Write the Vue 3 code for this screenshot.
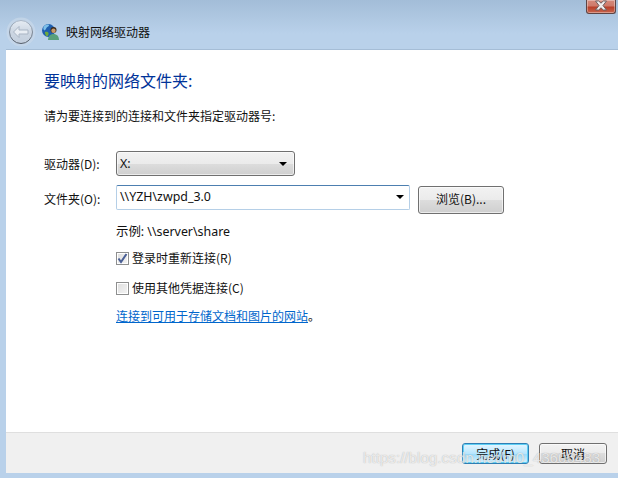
<script setup>
const base = 'https://blog.csdn.net/m0_43606483'
</script>

<template>
  <div class="window">
    <div class="caption">
      <button class="close" aria-label="关闭">
        <svg width="14" height="11" viewBox="0 0 14 11">
          <path d="M1.500 1h3.200L7 3.200 9.300 1h3.200L9 5.500l3.500 4.500H9.300L7 7.800 4.700 10H1.500L5 5.500z" fill="#f1eeee" stroke="#6b5f60" stroke-width="1"/>
        </svg>
      </button>
    </div>
    <div class="titlebar">
      <div class="back">
        <svg width="30" height="30" viewBox="0 0 30 30">
          <defs>
            <linearGradient id="backFill" x1="0" y1="0" x2="0" y2="1">
              <stop offset="0" stop-color="#e6ecf3"/>
              <stop offset="0.5" stop-color="#ccd6e2"/>
              <stop offset="1" stop-color="#c3cfde"/>
            </linearGradient>
            <linearGradient id="backRing" x1="0" y1="0" x2="0" y2="1">
              <stop offset="0" stop-color="#a9b6c6"/>
              <stop offset="1" stop-color="#545d69"/>
            </linearGradient>
          </defs>
          <circle cx="15" cy="15" r="14.500" fill="#c9d9ea" opacity=".7"/>
          <circle cx="15" cy="15" r="11.500" fill="url(#backFill)" stroke="url(#backRing)" stroke-width="1"/>
          <path d="M7.500 15l5.500-5.500v3.500h9v4h-9v3.500z" fill="#e9eef4" stroke="#a9b5c4" stroke-width="1" stroke-linejoin="round"/>
        </svg>
      </div>
      <svg class="netdrive" width="18" height="16" viewBox="0 0 18 16">
        <circle cx="6.500" cy="6.500" r="6.500" fill="#1f5fae"/>
        <path d="M2.500 1.800C4 .6 5.500.4 7 .8 7.300 2 6 2.700 5 3.300S4 6 2.500 6.500C.8 5.500 1 3 2.500 1.800z" fill="#7cc0ea"/>
        <path d="M3 8c1.500-.5 3-.3 3.500 1 .3 1.500-.3 2.800-1.500 3.500C3.700 11.500 2.800 9.800 3 8z" fill="#6cab3c"/>
        <circle cx="11.500" cy="6" r="3" fill="#3b2a1c"/>
        <circle cx="11.500" cy="6.800" r="2.200" fill="#c79a68"/>
        <path d="M6 16c0-3.800 2.200-6 5.500-6s5.500 2.200 5.500 6z" fill="#58a07c"/>
      </svg>
      <span class="title">映射网络驱动器</span>
    </div>

    <div class="panel">
      <main class="content">
        <h1 class="heading">要映射的网络文件夹:</h1>
        <p class="intro">请为要连接到的连接和文件夹指定驱动器号:</p>

        <div class="row drive-row">
          <label class="label">驱动器(D):</label>
          <div class="combo">
            <span>X:</span>
            <i class="arrow"></i>
          </div>
        </div>

        <div class="row folder-row">
          <label class="label">文件夹(O):</label>
          <div class="field">
            <span>\\YZH\zwpd_3.0</span>
            <i class="arrow"></i>
          </div>
          <button class="btn browse">浏览(B)...</button>
        </div>

        <div class="options">
          <p class="example">示例: \\server\share</p>
          <div class="check first">
            <span class="box">
              <svg width="11" height="11" viewBox="0 0 11 11">
                <path d="M1.500 5.500l2.500 3.500 5.500-8" fill="none" stroke="#4a5f95" stroke-width="2"/>
              </svg>
            </span>
            <span>登录时重新连接(R)</span>
          </div>
          <div class="check second">
            <span class="box"></span>
            <span>使用其他凭据连接(C)</span>
          </div>
          <p class="link-line"><a class="link">连接到可用于存储文档和图片的网站</a>。</p>
        </div>
      </main>

      <footer class="footer">
        <button class="btn primary">完成(F)</button>
        <button class="btn cancel">取消</button>
      </footer>
    </div>

    <div class="watermark">{{ base }}</div>
  </div>
</template>

<style>
html, body { margin: 0; background: #b9d1ea; }
</style>

<style scoped>
.window {
  position: relative;
  width: 618px;
  height: 478px;
  overflow: hidden;
  display: flex;
  flex-direction: column;
  background: linear-gradient(#a3bdd8 0, #b9d1ea 34px);
  font-family: "Noto Sans CJK SC", "Noto Sans", sans-serif;
  font-size: 12px;
  color: #111;
}
.caption {
  height: 13px;
  display: flex;
  justify-content: flex-end;
  padding-right: 2px;
}
.close {
  width: 30px;
  height: 14px;
  padding: 0;
  border: 1px solid #5d4444;
  border-top: 0;
  border-radius: 0 0 3px 3px;
  background: linear-gradient(#d58a7c 0, #cf7a6a 45%, #b8402a 55%, #c8664e 100%);
  box-shadow: inset 0 0 0 1px rgba(255,255,255,.35);
  display: flex;
  align-items: flex-start;
  justify-content: center;
}
.titlebar {
  height: 36px;
  display: flex;
  align-items: center;
  padding-left: 6px;
}
.back { width: 30px; height: 30px; margin-top: 2px; }
.netdrive { margin-left: 6px; margin-top: 1px; }
.title {
  margin-left: 6px;
  font-size: 12px;
  color: #111;
  margin-top: 1px;
}
.panel {
  flex: 1;
  margin: 0 0 5px 6px;
  display: flex;
  flex-direction: column;
  background: #fff;
  border-top: 1px solid #a5bdd6;
}
.content { flex: 1; padding: 19px 0 0 38px; }
.heading {
  margin: 0;
  font-size: 16px;
  font-weight: 400;
  line-height: 22px;
  color: #003399;
}
.intro { margin: 16px 0 0; line-height: 18px; }
.row { display: flex; align-items: flex-start; }
.label { width: 72px; line-height: 18px; }
.drive-row { margin-top: 26px; }
.drive-row .label { padding-top: 4px; }
.combo {
  width: 179px;
  height: 25px;
  box-sizing: border-box;
  border: 1px solid #707070;
  border-radius: 3px;
  background: linear-gradient(#f2f2f2 0, #ebebeb 50%, #dddddd 50%, #cfcfcf 100%);
  box-shadow: inset 0 0 0 1px rgba(255,255,255,.6);
  display: flex;
  align-items: center;
  justify-content: space-between;
  padding: 0 7px 1px 3px;
  font-family: "Noto Sans", sans-serif;
  font-size: 12.500px;
}
.arrow {
  width: 0;
  height: 0;
  border: 4px solid transparent;
  border-top: 4px solid #000;
  border-bottom: 0;
  margin-top: 2px;
}
.folder-row { margin-top: 9px; }
.folder-row .label { padding-top: 5px; }
.field {
  width: 294px;
  height: 25px;
  box-sizing: border-box;
  border: 1px solid #b5cfe7;
  border-top-color: #4d7fb0;
  border-radius: 2px;
  display: flex;
  align-items: center;
  justify-content: space-between;
  padding: 0 5px 3px 3px;
  font-family: "Noto Sans", sans-serif;
  font-size: 12.400px;
}
.btn {
  font: inherit;
  color: #111;
  padding: 0;
  box-sizing: border-box;
  border: 1px solid #707070;
  border-radius: 3px;
  background: linear-gradient(#f2f2f2 0, #ebebeb 50%, #dddddd 50%, #cfcfcf 100%);
  box-shadow: inset 0 0 0 1px rgba(255,255,255,.6);
}
.browse { width: 86px; height: 28px; margin: 1px 0 0 8px; padding-bottom: 3px; }
.options { padding-left: 72px; }
.example { margin: 9px 0 0; line-height: 18px; font-family: "Noto Sans", "Noto Sans CJK SC", sans-serif; font-size: 12.400px; }
.check { display: flex; align-items: center; gap: 3px; line-height: 18px; }
.first { margin-top: 8px; }
.second { margin-top: 12px; }
.box {
  width: 13px;
  height: 13px;
  box-sizing: border-box;
  border: 1px solid #8e8f8f;
  background: linear-gradient(135deg, #dedede, #f4f4f4);
  box-shadow: inset 0 0 0 1px #fff;
  display: flex;
  align-items: center;
  justify-content: center;
}
.link-line { margin: 10px 0 0; line-height: 18px; }
.link { color: #0066cc; text-decoration: underline; }
.footer {
  height: 40px;
  flex: none;
  box-sizing: content-box;
  border-top: 1px solid #dfdfdf;
  background: #f0f0f0;
  display: flex;
  justify-content: flex-end;
  align-items: flex-start;
  gap: 10px;
  padding-right: 11px;
}
.footer .btn { height: 21px; margin-top: 10px; padding-bottom: 1px; }
.cancel { width: 68px; }
.primary {
  width: 67px;
  border-color: #2f7fb5;
  background: linear-gradient(#e6f6ff 0, #b8e6fd 50%, #9ddcfb 55%, #d8f2fe 100%);
  box-shadow: inset 0 0 0 1px #5fd0f5;
}
.watermark {
  position: absolute;
  left: 363px;
  top: 448px;
  font-family: "Liberation Sans", sans-serif;
  font-size: 15.200px;
  line-height: 20px;
  color: rgba(255,255,255,.72);
  white-space: nowrap;
  text-shadow: 0 0 1px rgba(110,110,110,.55);
}
</style>
